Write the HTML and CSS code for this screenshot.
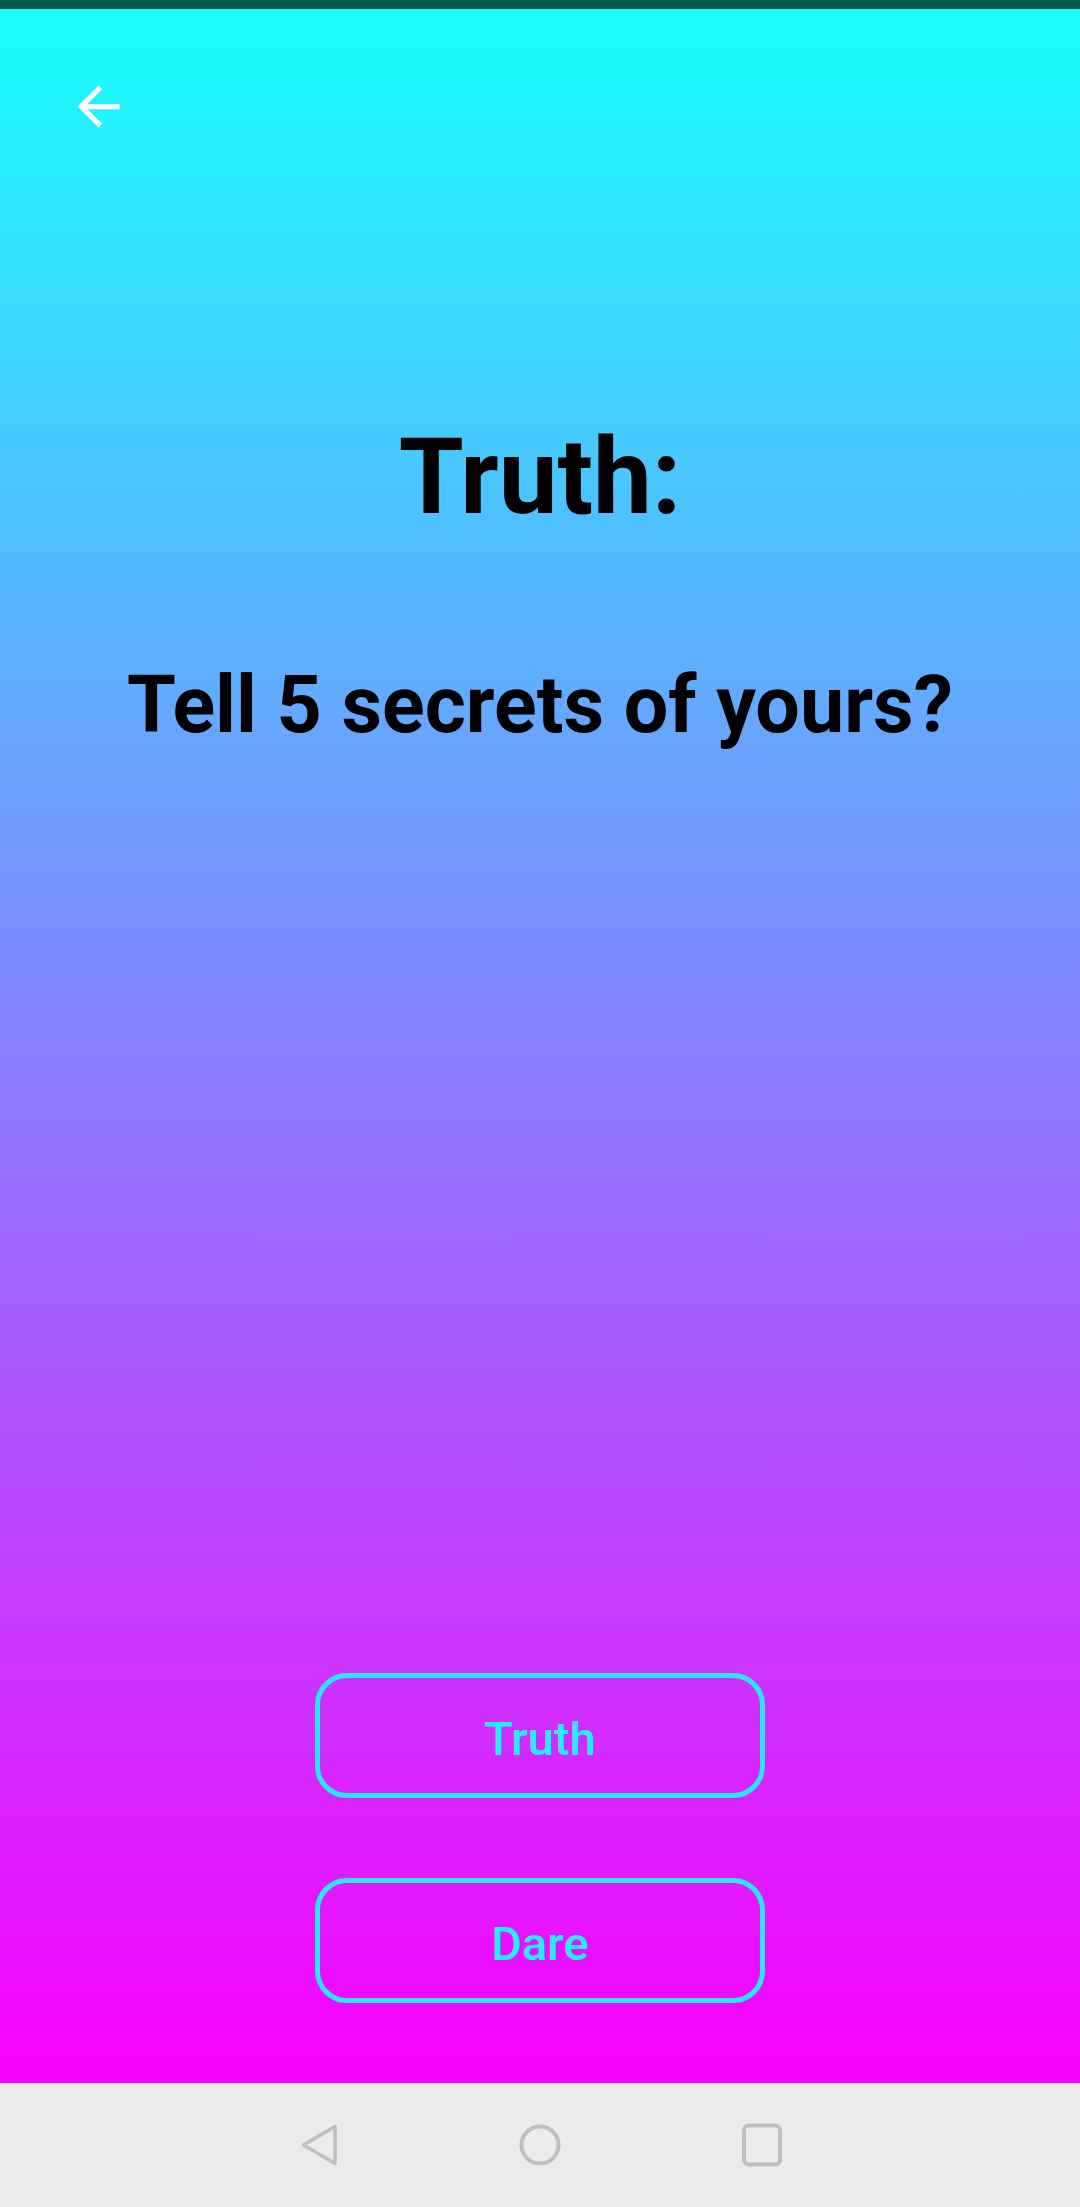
FILE: index.html
```html
<!DOCTYPE html>
<html lang="en">
<head>
<meta charset="utf-8">
<title>Truth</title>
<link rel="stylesheet" href="styles.css">
</head>
<body>
<div class="screen">
  <div class="status-bar"></div>
  <main class="app">
    <div class="toolbar">
      <svg class="back-icon" viewBox="0 0 24 24" width="63" height="63">
        <path d="M20 11H7.83l5.59-5.59L12 4l-8 8 8 8 1.41-1.41L7.83 13H20v-2z" fill="#ffffff"/>
      </svg>
    </div>
    <h1 class="title">Truth:</h1>
    <p class="question">Tell 5 secrets of yours?</p>
    <div class="actions">
      <button class="choice">Truth</button>
      <button class="choice">Dare</button>
    </div>
  </main>
  <nav class="nav-bar">
    <svg class="nav-icon" viewBox="0 0 44 44" width="44" height="44">
      <path d="M39 3.5 L39 40.5 L7.5 22 Z" fill="none" stroke="#bfbfbf" stroke-width="3.5" stroke-linejoin="round"/>
    </svg>
    <svg class="nav-icon" viewBox="0 0 44 44" width="44" height="44">
      <circle cx="22" cy="22" r="18.5" fill="none" stroke="#bfbfbf" stroke-width="4"/>
    </svg>
    <svg class="nav-icon" viewBox="0 0 44 44" width="44" height="44">
      <rect x="4" y="2.5" width="36" height="39" rx="5" fill="none" stroke="#bfbfbf" stroke-width="4"/>
    </svg>
  </nav>
</div>
</body>
</html>
```
FILE: styles.css
```css
* {
  box-sizing: border-box;
}

html, body {
  margin: 0;
  padding: 0;
}

body {
  font-family: Roboto, "Liberation Sans", Arial, sans-serif;
}

.screen {
  width: 1080px;
  height: 2207px;
  display: flex;
  flex-direction: column;
  overflow: hidden;
}

.status-bar {
  height: 9px;
  background: #03574b;
  flex: none;
}

.app {
  flex: 1;
  display: flex;
  flex-direction: column;
  align-items: center;
  background: linear-gradient(to bottom, #18ffff 0%, #f800ff 100%);
}

.toolbar {
  align-self: stretch;
  padding: 66px 0 0 67px;
  height: 130px;
}

.back-icon {
  display: block;
}

.title {
  margin: 277px 0 0;
  font-size: 105px;
  line-height: 123px;
  font-weight: 700;
  color: #000;
  text-align: center;
}

.question {
  margin: 120px 0 0;
  font-size: 79px;
  line-height: 92px;
  font-weight: 700;
  color: #000;
  text-align: center;
}

.actions {
  margin-top: auto;
  padding-bottom: 80px;
  display: flex;
  flex-direction: column;
  gap: 80px;
}

.choice {
  width: 450px;
  height: 125px;
  border: 5px solid #27e8ff;
  border-radius: 32px;
  background: transparent;
  color: #22eeff;
  font-family: Roboto, "Liberation Sans", Arial, sans-serif;
  font-size: 47px;
  font-weight: 500;
  padding: 5px 0 0;
}

.nav-bar {
  height: 124px;
  flex: none;
  background: #ebebeb;
  display: flex;
  justify-content: center;
  align-items: center;
  gap: 178px;
}

.nav-icon {
  display: block;
}
```
